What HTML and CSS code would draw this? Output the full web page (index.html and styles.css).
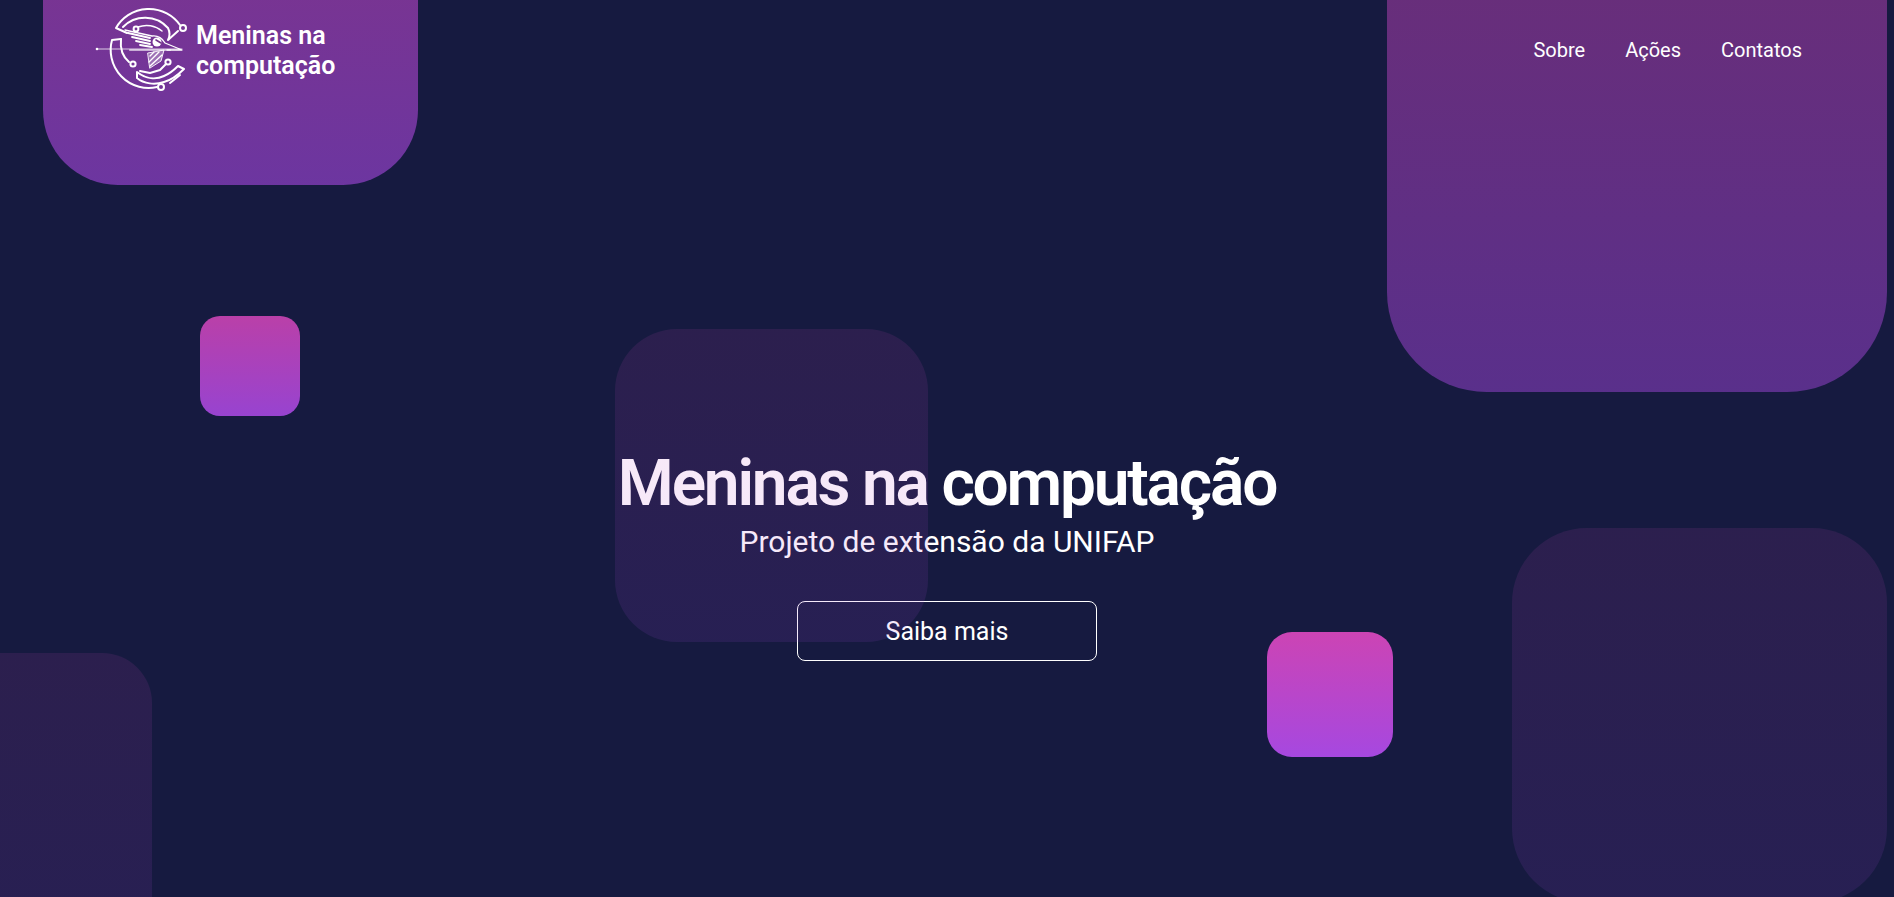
FILE: index.html
```html
<!DOCTYPE html>
<html lang="pt-BR">
<head>
    <meta charset="UTF-8">
    <meta name="viewport" content="width=device-width, initial-scale=1.0">
    <title>Meninas na computação</title>
    <link rel="stylesheet" href="styles.css">
</head>
<body>
    <div class="page">
        <header class="header">
            <a class="brand" href="#">
                <svg class="brand-logo" viewBox="0 0 110 100" fill="none" stroke="#fff" stroke-width="2" stroke-linecap="round" stroke-linejoin="round">
                    <!-- top ring -->
                    <path d="M37 33 L26 28 A38 38 0 0 1 90 25" />
                    <circle cx="93" cy="28" r="3" />
                    <path d="M33 27 A31 31 0 0 1 78 28 C80 32 80 36 78 40 L88 31" />
                    <circle cx="46" cy="29" r="2.4" />
                    <path d="M48 27 A24 24 0 0 1 72 31" stroke-width="1.5" />
                    <!-- left ring -->
                    <path d="M31 39 L22 40 A38 38 0 0 0 67 87" />
                    <circle cx="71" cy="87" r="3" />
                    <path d="M31 39 C30 48 32 56 39 62" />
                    <circle cx="43" cy="64" r="2.6" />
                    <!-- bottom ring -->
                    <path d="M47 72 C56 79 66 80 74 76 C79 74 84 70 88 66 L94 69 C88 75 82 80 74 82 C65 85 54 84 47 78 Z" />
                    <path d="M80 83 L90 75" />
                    <circle cx="78" cy="62" r="2.6" />
                    <path d="M76 64 L70 70 L60 73 L50 71" />
                    <!-- bird -->
                    <path d="M35 30 L62 36 C68 35 73 39 75 43 L92 50 L77 50" stroke-width="1.3" />
                    <path d="M38 33 L60 38 M42 37 L60 41 M46 41 L60 44 M50 45 L62 47" stroke-width="1.8" />
                    <circle cx="67" cy="42" r="4.5" fill="#fff" stroke="none" />
                    <path d="M66 40 L71 43" stroke="#703389" stroke-width="1.6" />
                    <path d="M58 53 L74 50 L71 61 L60 68 Z" fill="#fff" fill-opacity="0.3" stroke-width="0.9" />
                    <path d="M60 56 L64 52 M59 62 L69 52 M60 66 L72 55" stroke-width="1.4" />
                    <!-- arrow line -->
                    <path d="M7 49 L92 49" stroke-width="1" opacity="0.75" />
                    <path d="M40 50 L80 50" stroke-width="2.2" opacity="0.6" />
                    <circle cx="7" cy="49" r="1.3" fill="#fff" stroke="none" />
                </svg>
                <span class="brand-name">Meninas na<br>computação</span>
            </a>
            <nav class="nav">
                <a href="#">Sobre</a>
                <a href="#">Ações</a>
                <a href="#">Contatos</a>
            </nav>
        </header>

        <main class="hero">
            <h1>Meninas na computação</h1>
            <p>Projeto de extensão da UNIFAP</p>
            <a class="btn" href="#">Saiba mais</a>
        </main>

        <!-- decorative squares -->
        <div class="square sq-logo"></div>
        <div class="square sq-top"></div>
        <div class="square sq-small"></div>
        <div class="square sq-center"></div>
        <div class="square sq-pink"></div>
        <div class="square sq-left"></div>
        <div class="square sq-right"></div>
    </div>
</body>
</html>
```

FILE: styles.css
```css
* {
    box-sizing: border-box;
}
html, body {
    margin: 0;
    height: 100%;
}
body {
    font-family: Roboto, "Liberation Sans", sans-serif;
    background: #161a40;
    color: #fff;
    overflow: hidden;
}
a {
    color: inherit;
    text-decoration: none;
}
.page {
    position: relative;
    height: 897px;
    overflow: hidden;
    display: flex;
    flex-direction: column;
}
.header {
    display: flex;
    justify-content: space-between;
    align-items: center;
    height: 100px;
    padding: 0 92px 0 90px;
}
.brand {
    display: flex;
    align-items: center;
    position: relative;
    z-index: 2;
}
.brand-logo {
    width: 110px;
    height: 100px;
}
.brand-name {
    font-size: 25px;
    font-weight: 600;
    line-height: 30px;
    margin-left: -4px;
    padding-top: 2px;
}
.nav {
    display: flex;
    gap: 40px;
    font-size: 20px;
    position: relative;
    z-index: 2;
}
.hero {
    display: flex;
    flex-direction: column;
    align-items: center;
    padding-top: 346px;
}
.hero h1 {
    margin: 0;
    font-size: 64px;
    font-weight: 600;
    line-height: 75px;
    letter-spacing: -2.2px;
}
.hero p {
    margin: 3px 0 0;
    font-size: 30px;
    line-height: 35px;
}
.btn {
    display: flex;
    align-items: center;
    justify-content: center;
    width: 300px;
    height: 60px;
    margin-top: 42px;
    border: 1px solid #fff;
    border-radius: 8px;
    font-size: 25px;
}
.square {
    position: absolute;
    background: linear-gradient(180deg, #cc44b4, #a648e0);
}
.sq-logo {
    left: 43px;
    top: -190px;
    width: 375px;
    height: 375px;
    border-radius: 75px;
    opacity: 0.6;
}
.sq-top {
    left: 1387px;
    top: -108px;
    width: 500px;
    height: 500px;
    border-radius: 100px;
    opacity: 0.47;
}
.sq-small {
    left: 200px;
    top: 316px;
    width: 100px;
    height: 100px;
    border-radius: 20px;
    opacity: 0.9;
}
.sq-center {
    left: 615px;
    top: 329px;
    width: 313px;
    height: 313px;
    border-radius: 62px;
    opacity: 0.12;
}
.sq-pink {
    left: 1267px;
    top: 632px;
    width: 126px;
    height: 125px;
    border-radius: 25px;
}
.sq-left {
    left: -148px;
    top: 653px;
    width: 300px;
    height: 300px;
    border-radius: 50px;
    opacity: 0.12;
}
.sq-right {
    left: 1512px;
    top: 528px;
    width: 375px;
    height: 375px;
    border-radius: 75px;
    opacity: 0.12;
}
```
